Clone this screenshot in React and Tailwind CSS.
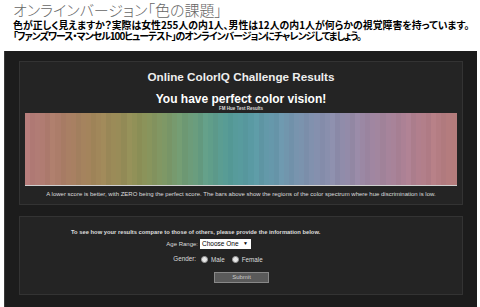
import React from "react";

// muted hue strip, left to right, taken from the screenshot
const STOPS = [
  "#b47c7a", "#ae7c6e", "#a88062", "#a2865a", "#9a8c58", "#8e9258",
  "#809864", "#709c76", "#629e88", "#569c98", "#5a9aa4", "#6898ac",
  "#7894ae", "#8690ae", "#908caa", "#9c88a4", "#a6849c", "#ae8092",
  "#b47e86", "#b47c7c",
];

const mix = (a, b, t) => {
  const pa = [1, 3, 5].map((i) => parseInt(a.slice(i, i + 2), 16));
  const pb = [1, 3, 5].map((i) => parseInt(b.slice(i, i + 2), 16));
  return `rgb(${pa.map((v, i) => Math.round(v + (pb[i] - v) * t)).join(",")})`;
};

const BARS = Array.from({ length: 85 }, (_, i) => {
  const pos = (i / 84) * (STOPS.length - 1);
  const k = Math.min(Math.floor(pos), STOPS.length - 2);
  const shade = i % 3 === 1 ? 0.975 : i % 5 === 0 ? 1.02 : 1;
  return { color: mix(STOPS[k], STOPS[k + 1], pos - k), shade };
});

const sans = "font-['Liberation_Sans',Arial,sans-serif]";

const Radio = ({ label }) => (
  <span className="flex items-center gap-[3px]">
    <span className="w-[7px] h-[7px] rounded-full bg-[#e8e8e8] border border-[#999]" />
    <span>{label}</span>
  </span>
);

const App = () => {
  return (
    <div className="w-[480px] h-[307px] bg-white overflow-hidden">
      {/* Japanese intro */}
      <div className="h-[42px] pl-[13px] font-['Noto_Sans_CJK_JP',sans-serif] [font-feature-settings:'palt']">
        <h1 className="h-[20px] text-[15px] leading-[19px] font-light text-[#666] whitespace-nowrap">
          オンラインバージョン「色の課題」
        </h1>
        <p className="h-[11px] text-[9.9px] leading-[11px] font-bold text-black whitespace-nowrap">
          色が正しく見えますか？実際は女性255人の内1人、男性は12人の内1人が何らかの視覚障害を持っています。
        </p>
        <p className="h-[11px] text-[9.9px] leading-[11px] font-bold text-black whitespace-nowrap tracking-[-1px]">
          「ファンズワース・マンセル100ヒューテスト」のオンラインバージョンにチャレンジしてましょう。
        </p>
      </div>

      {/* dark results box */}
      <div className={`mt-[9px] ml-[4px] w-[473px] h-[256px] bg-[#1c1c1c] border-l border-[#3a3a3a] px-[14px] pt-[10px] ${sans}`}>
        <div className="h-[144px] bg-[#242424] border border-[#333] flex flex-col items-center">
          <div className="mt-[8px] text-[11.7px] leading-[14px] font-bold text-[#eee]">
            Online ColorIQ Challenge Results
          </div>
          <div className="mt-[8px] text-[12px] leading-[14px] font-bold text-white">
            You have perfect color vision!
          </div>
          <div className="text-[4.5px] leading-[5px] font-bold text-[#ddd]">FM Hue Test Results</div>
          <div className="mt-[2px] w-[432px] h-[73px] flex border-b border-[#cfcfcf]">
            {BARS.map((b, i) => (
              <div
                key={i}
                className="flex-1 h-full"
                style={{ backgroundColor: b.color, filter: `brightness(${b.shade})` }}
              />
            ))}
          </div>
          <div className="mt-[4px] text-[6px] leading-[8px] text-[#ddd] whitespace-nowrap">
            A lower score is better, with ZERO being the perfect score. The bars above show the regions of the color spectrum where hue discrimination is low.
          </div>
        </div>

        <div className="mt-[11px] h-[79px] bg-[#242424] border border-[#333] text-[#ddd]">
          <div className="pl-[51px] pt-[12px] text-[5.8px] leading-[7px] font-bold whitespace-nowrap">
            To see how your results compare to those of others, please provide the information below.
          </div>
          <div className="mt-[3px] flex items-center text-[6px]">
            <span className="w-[180px] text-right pr-[2px]">Age Range:</span>
            <span className="w-[51px] h-[10px] bg-white text-black flex items-center justify-between pl-[2px] pr-[3px] text-[6.5px]">
              <span>Choose One</span>
              <span className="text-[5px]">▼</span>
            </span>
          </div>
          <div className="mt-[4px] flex items-center text-[6.3px]">
            <span className="w-[181px] text-right pr-[5px]">Gender:</span>
            <span className="flex items-center gap-[7px] mt-[2px]">
              <Radio label="Male" />
              <Radio label="Female" />
            </span>
          </div>
          <div className="mt-[8px] pl-[194px]">
            <div className="w-[55px] h-[11px] bg-[#5a5a5a] border border-[#888] flex items-center justify-center text-[6px] text-[#ccc]">
              Submit
            </div>
          </div>
        </div>
      </div>
    </div>
  );
};

export default App;
